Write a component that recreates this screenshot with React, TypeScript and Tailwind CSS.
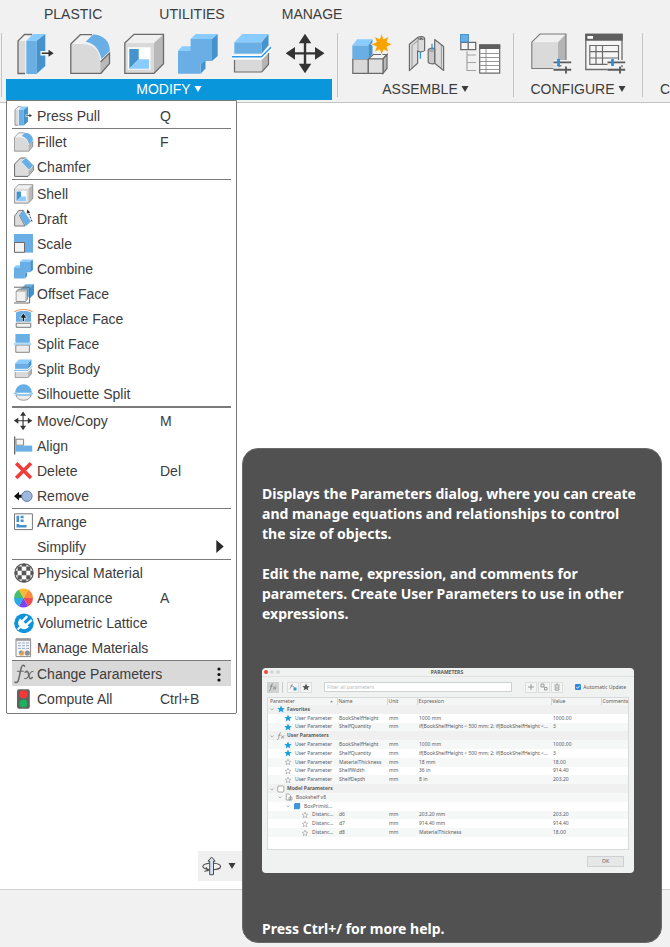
import type { ReactNode } from "react";

const EDGE = "#6b6b6b";
const BLUE = "#69afe5";
const BLUE_DARK = "#4493cf";
const BLUE_LIGHT = "#8accff";

function Art({ small, children }: { small?: boolean; children: ReactNode }) {
  return (
    <svg viewBox="0 0 42 42" className={small ? "size-5 shrink-0" : "size-[42px] shrink-0"} aria-hidden="true">
      {children}
    </svg>
  );
}

function Glyph({ children }: { children?: ReactNode }) {
  return (
    <svg viewBox="0 0 20 20" className="size-5 shrink-0" fill="none" aria-hidden="true">
      {children}
    </svg>
  );
}

/* Tool drawings on a 42 unit canvas, used in the ribbon and in the menu */

function PressPull({ small }: { small?: boolean }) {
  return (
    <Art small={small}>
      <path d="M2 8 8.5 1.5H16L10 8V40.5H2Z" fill="#d9d9d9" />
      <path d="M2 8 8.5 1.5H16L10 8Z" fill="#f3f3f3" />
      <path d="M16 1.5H8.5L2 8V40.5H9" fill="none" stroke={EDGE} strokeWidth="1.3" />
      <path d="M9.2 8H20.5V41H9.2Z" fill="#f5f5f5" />
      <path d="M10.3 8H20.5V41H10.3Z" fill={BLUE} />
      <path d="M10.3 8 17 1H29.3L20.5 8Z" fill={BLUE_LIGHT} />
      <path d="M29.3 1V33L20.5 41V8Z" fill={BLUE_DARK} />
      <path d="M24.5 18H31V15L38.5 20.2 31 25.5V22.5H24.5Z" fill="#f5f5f5" />
      <path d="M25.8 19.4H32.5V16.7L37.7 20.2 32.5 23.7V21H25.8Z" fill="#333" />
    </Art>
  );
}

function Fillet({ small }: { small?: boolean }) {
  return (
    <Art small={small}>
      <path d="M.8 11 10.3 1.7H23L15 10Z" fill="#f2f2f2" />
      <path d="M.8 11H13.3C24 11.5 30 18 30.3 30V40.3H.8Z" fill="#d9d9d9" />
      <path d="M30.3 29.5 39.5 20V30L31 40.3H30.3Z" fill="#b9b9b9" />
      <path d="M22 1.7H10.3L.8 11V40.3H31L39.5 30.5V20L30.5 29" fill="none" stroke={EDGE} strokeWidth="1.3" />
      <path d="M15.7 8.7 23 1.5C33 1.7 39.8 8 39.8 17.7L31.5 26.3C29.5 16.5 24 10 15.7 8.7Z" fill={BLUE} />
    </Art>
  );
}

function Shell({ small }: { small?: boolean }) {
  return (
    <Art small={small}>
      <path d="M.8 10 10 1.3H39.5L30 10Z" fill="#f0f0f0" />
      <path d="M30 10 39.5 1.3V30.7L30 40.3Z" fill="#b9b9b9" />
      <path d="M.8 10H30V40.3H.8Z" fill="#d9d9d9" />
      <path d="M.8 10 10 1.3H39.5V30.7L30 40.3H.8Z" fill="none" stroke={EDGE} strokeWidth="1.3" />
      <path d="M3.7 14.3H26.5V36.5H3.7Z" fill="#fff" />
      <path d="M5.3 16H14.7V26.3L5.3 35.7Z" fill={BLUE_DARK} />
      <path d="M14.7 26.3H25V35.7H5.3Z" fill={BLUE_LIGHT} />
    </Art>
  );
}

function Combine({ small }: { small?: boolean }) {
  return (
    <Art small={small}>
      <path d="M0 18 4 13.3H14V18Z" fill={BLUE_LIGHT} />
      <path d="M12.6 6 17.5 1H39.7L34 6Z" fill={BLUE_LIGHT} />
      <path d="M39.7 1V23L34 28V6Z" fill={BLUE_DARK} />
      <path d="M27.5 28V35.5L22.7 40.7V31L26 28Z" fill={BLUE_DARK} />
      <path d="M0 18H12.6V6H34V28H26L22.7 31V40.7H0Z" fill={BLUE} />
    </Art>
  );
}

function SplitBody({ small }: { small?: boolean }) {
  return (
    <Art small={small}>
      <path d="M2.3 9.3 10.3 1H36.5L29.7 9.3Z" fill={BLUE_LIGHT} />
      <path d="M2.3 9.3H29.7V20.7H2.3Z" fill={BLUE} />
      <path d="M36.5 1V12.3L29.7 20.7V9.3Z" fill={BLUE_DARK} />
      <path d="M2.5 27H29.7V39H2.5Z" fill="#d9d9d9" />
      <path d="M29.7 27 36.5 20V31.5L29.7 39Z" fill="#b5b5b5" />
      <path d="M2.5 27V39H29.7L36.5 31.5V20" fill="none" stroke={EDGE} strokeWidth="1.2" />
      <path d="M0 23.8H29.5L39 14.2" fill="none" stroke="#fff" strokeWidth="4" />
      <path d="M-.7 23.8H29.5L39 14.2" fill="none" stroke="#2f98ea" strokeWidth="1.5" />
    </Art>
  );
}

function Move({ small }: { small?: boolean }) {
  return (
    <Art small={small}>
      <path d="M19 .8 25.3 10.2H20.2V19.2H29V14L38.5 20.3 29 26.7V21.5H20.2V30.8H25.3L19 40.2 12.8 30.8H17.8V21.5H9V26.7L-.3 20.3 9 14V19.2H17.8V10.2H12.8Z" fill="#333" />
    </Art>
  );
}

function NewComponent() {
  return (
    <Art>
      <path d="M.8 26H16.3V40.3H.8Z" fill="#d9d9d9" stroke={EDGE} strokeWidth="1.2" />
      <path d="M16.3 26 21.3 21.5H35L31 26Z" fill="#f3f3f3" stroke={EDGE} strokeWidth="1.2" />
      <path d="M31 26 35 21.5V35.5L31 40.3Z" fill="#b9b9b9" stroke={EDGE} strokeWidth="1.2" />
      <path d="M16.3 26H31V40.3H16.3Z" fill="#e0e0e0" stroke={EDGE} strokeWidth="1.2" />
      <path d="M.3 12.5 5 6.3H20.5L16.3 12.5Z" fill={BLUE_LIGHT} />
      <path d="M.3 12.5H16.3V26H.3Z" fill={BLUE} />
      <path d="M20.5 6.3V21L16.3 26V12.5Z" fill={BLUE_DARK} />
      <path d="M29.7 .2 31.7 6 36.8 3.2 35 9 40.5 11.3 35 13.7 36.8 19.2 31.7 16.8 29.7 22.3 27.6 16.8 22.3 19.2 24.4 13.7 18.8 11.3 24.4 9 22.3 3.2 27.6 6Z" fill="#f9a300" stroke="#f1f1f1" strokeWidth=".8" />
    </Art>
  );
}

function Joint() {
  return (
    <Art>
      <g stroke={EDGE} strokeWidth="1.2" strokeLinejoin="round">
        <path d="M3.4 11.3 12 4.2C14 3 18.3 3.5 18.6 5.3V17.5C17.5 19 12.5 19.5 11.6 17.8V30.3L3.4 37.6Z" fill="#dcdcdc" />
        <path d="M12 5.2V17.5M6 36V12.5L12 7.5" fill="none" strokeWidth=".6" />
        <path d="M12 5.5C13.5 7 17.5 7 18.6 5.4" fill="none" strokeWidth=".9" />
        <path d="M28.7 6.5 37.6 13.5V37.5L28.7 30.3Z" fill="#dcdcdc" />
        <path d="M28.7 16C27 14.6 22.6 15.2 22.2 17V29C23 31 27.5 31.3 28.7 30.3Z" fill="#cbcbcb" />
        <path d="M22.2 17C23.5 18.5 27.5 18.7 28.7 17.5M35.4 12V35.7" fill="none" strokeWidth=".6" />
      </g>
      <path d="M14.4 18.7V25.8M26 10.7V17.5" stroke="#2f98ea" strokeWidth="1.3" />
      <path d="M13.5 5.3H16.5" stroke="#444" strokeWidth="1" />
    </Art>
  );
}

function ComponentTable() {
  return (
    <Art>
      <path d="M.8 9.3H8.2V16.7H.8ZM8.2 9.3H15.7V16.7H8.2Z" fill="#f5f5f5" stroke={EDGE} strokeWidth="1.3" />
      <path d="M0 1H9V9.3H0Z" fill={BLUE_DARK} />
      <path d="M1 2H8V8.5H1Z" fill={BLUE} />
      <path d="M7 18.3V37.5H16M7 22H16M7 29.5H16" fill="none" stroke="#a3a3a3" strokeWidth="1.2" />
      <path d="M19.7 12H39.7V40.2H19.7Z" fill="#fff" stroke={EDGE} strokeWidth="1.2" />
      <path d="M19.2 11.3H40.2V16H19.2Z" fill="#5f5f5f" />
      <path d="M19.7 20.5H39.7M19.7 24.5H39.7M19.7 28.5H39.7M19.7 32.5H39.7M19.7 36.5H39.7M26 16V40" stroke="#8a8a8a" strokeWidth=".9" />
    </Art>
  );
}

function Sliders() {
  return (
    <g>
      <path d="M22.5 29.4H40.2M22.5 36.8H40.2" stroke="#f1f1f1" strokeWidth="5" />
      <path d="M22.5 29.4H40.2M22.5 36.8H40.2" stroke="#5c5c5c" strokeWidth="1.9" />
      <path d="M35 33.4V40.4" stroke="#5c5c5c" strokeWidth="1.9" />
      <path d="M27.5 26V33" stroke="#2391e6" strokeWidth="2.8" />
    </g>
  );
}

function ConfigureBody() {
  return (
    <Art>
      <path d="M.8 9.2 9 1H35L27 9.2Z" fill="#f0f0f0" />
      <path d="M27 9.2 35 1V27L27 35.5Z" fill="#b4b4b4" />
      <path d="M.8 9.2H27V35.5H.8Z" fill="#dadada" />
      <path d="M.8 9.2 9 1H35V27L27 35.5H.8Z" fill="none" stroke="#7a7a7a" strokeWidth="1.1" />
      <Sliders />
    </Art>
  );
}

function ConfigureTable() {
  return (
    <Art>
      <path d="M.8 1.3H37V36.5H.8Z" fill="#f5f5f5" stroke={EDGE} strokeWidth="1.3" />
      <path d="M.2 .7H37.7V7.8H.2Z" fill="#5f5f5f" />
      <path d="M2.4 3H8V5.8H2.4Z" fill="#fff" />
      <path d="M4.8 12.5H33.5V31.3H4.8ZM4.8 18.7H33.5M4.8 25H33.5M11 12.5V31.3M17.5 12.5V31.3" fill="none" stroke={EDGE} strokeWidth="1.2" />
      <Sliders />
    </Art>
  );
}

/* Menu-only drawings on a 20 unit canvas */

const chamfer = (
  <Glyph>
    <path d="M.6 7 6.5 1H12L19.3 8.5V13.5L14 19.4H.6Z" fill="#dcdcdc" stroke={EDGE} />
    <path d="M14.5 14 19 9V13.8L14.5 19Z" fill="#b5b5b5" />
    <path d="M7 4.6 11.8 .8 19.5 8.2 15 13.2Z" fill={BLUE} stroke="#eef6fc" strokeWidth=".6" />
  </Glyph>
);
const draft = (
  <Glyph>
    <path d="M.6 7 4.8 1.4H9.5L5.5 6.5 11 17H.6Z" fill="#dcdcdc" stroke={EDGE} strokeWidth=".9" />
    <path d="M5.5 6 9.5 1.2 17 12.5 11.8 17.3Z" fill={BLUE} />
    <path d="M18 12.5 14 2.5" stroke="#333" strokeDasharray="2 1.3" />
    <path d="M13.2 .6 16.3 3.6 12.7 4.6Z" fill="#333" />
  </Glyph>
);
const scale = (
  <Glyph>
    <path d="M0 0H19V18.6H0Z" fill={BLUE} />
    <path d="M.5 8.5H10.5V18.3H.5Z" fill="#f3f3f3" stroke={EDGE} />
  </Glyph>
);
const offsetFace = (
  <Glyph>
    <path d="M6.5 5 11.5 .3H20V10L15.5 14Z" fill={BLUE} />
    <path d="M16 4 20 .3V10L16 14Z" fill={BLUE_DARK} />
    <path d="M0 3.2H15.6V19H0" stroke={EDGE} />
    <path d="M2.2 7.2 5 5H13.5V15L11.5 17.5H2.2Z" fill="#b9b9b9" stroke="#7c7c7c" strokeWidth=".8" />
    <path d="M2.6 7.8H11.4V17H2.6Z" fill="#f0f0f0" />
  </Glyph>
);
const replaceFace = (
  <Glyph>
    <path d="M.3 2.7C5.5-.3 13.5-.3 18.5 2.7" stroke="#e8a06c" strokeWidth="1.1" />
    <path d="M2 3.4C6 1.6 12.6 1.6 17 3.4V12.8H2Z" fill={BLUE} />
    <path d="M2.2 14.2H16.8V18.3H2.2Z" fill="#f3f3f3" stroke={EDGE} strokeWidth=".9" />
    <path d="M9.4 4 13 9H10.5V12.5H8.3V9H5.8Z" fill="#222" stroke="#e6f3fc" strokeWidth=".7" />
  </Glyph>
);
const splitFace = (
  <Glyph>
    <path d="M1.4 0H15.8V8.8H1.4Z" fill={BLUE} />
    <path d="M1.8 11H15.4V18.3H1.8Z" fill="#ededed" stroke={EDGE} strokeWidth=".8" />
    <path d="M0 10H17.3" stroke="#9bcff5" strokeWidth="1.5" />
  </Glyph>
);
const silhouette = (
  <Glyph>
    <path d="M1 8.8A8.5 8.5 0 0 1 18 8.8Z" fill={BLUE} />
    <path d="M1.8 11A8 7.2 0 0 0 17.2 11Z" fill="#ededed" stroke="#858585" strokeWidth=".8" />
    <path d="M0 9.2C5 11.8 14 11.8 19 9.2" stroke="#8ac8f4" strokeWidth="1.6" />
  </Glyph>
);
const align = (
  <Glyph>
    <path d="M.7 .5V18.5" stroke="#666" strokeWidth="1.3" />
    <path d="M2 3.2H9.6V9.2H2Z" fill="#f3f3f3" stroke="#777" strokeWidth=".9" />
    <path d="M1.4 9.6H18.2V15.6H1.4Z" fill={BLUE} />
  </Glyph>
);
const remove = (
  <Glyph>
    <path d="M0 10.2 5 5.8V8.7H9V11.7H5V14.6Z" fill="#111" />
    <circle cx="12.9" cy="10.2" r="5.2" fill="#9db7dd" stroke="#5f7ba6" />
  </Glyph>
);
const del = (
  <Glyph>
    <path d="M2.2 2.2 17 17M17 2.2 2.2 17" stroke="#f23c3c" strokeWidth="3.6" />
  </Glyph>
);
const arrange = (
  <Glyph>
    <path d="M.5 1.8H18.4V17.6H.5Z" fill="#fff" stroke="#777" />
    <path d="M2.5 3.8H5.2V10H2.5ZM6.6 3.8H9.6V6.3H6.6ZM6.6 7.5H9.6V10H6.6ZM2.5 12H5.2V13H12.5V15.6H2.5Z" fill={BLUE_DARK} />
  </Glyph>
);
const physical = (
  <Glyph>
    <clipPath id="ball">
      <circle cx="10" cy="10" r="9.2" />
    </clipPath>
    <circle cx="10" cy="10" r="9.2" fill="#fafafa" />
    <g clipPath="url(#ball)" fill="#565656">
      <path d="M7.7 0H12.3V3.6H7.7ZM3.6 3.6H7.7V7.8H3.6ZM12.3 3.6H16.4V7.8H12.3ZM7.7 7.8H12.3V12.2H7.7ZM0 7.8H3.6V12.2H0ZM16.4 7.8H20V12.2H16.4ZM3.6 12.2H7.7V16.4H3.6ZM12.3 12.2H16.4V16.4H12.3ZM7.7 16.4H12.3V20H7.7Z" />
    </g>
    <circle cx="10" cy="10" r="9.2" stroke="#555" strokeWidth="1.1" />
  </Glyph>
);
const appearance = (
  <Glyph>
    <path d="M9.5 10 4.8 1.8A9.4 9.4 0 0 1 14.2 1.8Z" fill="#fdb92e" />
    <path d="M9.5 10 14.2 1.8A9.4 9.4 0 0 1 18.9 10Z" fill="#ff8b3d" />
    <path d="M9.5 10H18.9A9.4 9.4 0 0 1 14.2 18.2Z" fill="#ef4b52" />
    <path d="M9.5 10 14.2 18.2A9.4 9.4 0 0 1 4.8 18.2Z" fill="#7b45ee" />
    <path d="M9.5 10 4.8 18.2A9.4 9.4 0 0 1 .1 10Z" fill="#29a9e6" />
    <path d="M9.5 10H.1A9.4 9.4 0 0 1 4.8 1.8Z" fill="#46bd6a" />
  </Glyph>
);
const volumetric = (
  <Glyph>
    <circle cx="10" cy="10.3" r="9.8" fill="#0d94db" />
    <path d="M6 5.5 15 13.8C12.6 16.6 9 17 6.8 15L4.2 17.2 3 15.7 5.4 13.4C3.4 11.2 3.8 8 6 5.5Z" fill="#fff" />
    <path d="M8.6 8 12.6 3.8M12.6 11.6 17 7.6" stroke="#fff" strokeWidth="2.4" strokeLinecap="round" />
  </Glyph>
);
const manage = (
  <Glyph>
    <path d="M2 .8H16.6V18.6H2Z" fill="#f4f5fa" stroke="#8b8b8b" />
    <path d="M2 .8H16.6V2.8H2Z" fill="#9a9a9a" />
    <path d="M4 5H15M4 7.7H15M4 10.4H15" stroke="#9aa9c8" strokeWidth="1" strokeDasharray="3 1" />
    <circle cx="7.5" cy="15" r="2.6" fill="#e8a33d" />
    <path d="M7.5 15V12.4A2.6 2.6 0 0 0 5 15Z" fill="#4c9be0" />
    <circle cx="13.3" cy="15" r="2.6" fill="#8f8f8f" />
  </Glyph>
);
const compute = (
  <Glyph>
    <rect x="3" y=".2" width="12.8" height="19.6" rx="2" fill="#616161" />
    <circle cx="9.4" cy="5.3" r="4" fill="#fb3636" />
    <circle cx="9.4" cy="14.4" r="4" fill="#19b35c" />
  </Glyph>
);
const fx = (
  <Glyph>
    <g stroke="#6a6a6a" strokeLinecap="round">
      <path d="M10.6 2.2C9.3 .6 8 1 7.3 3.6L4.6 15.5C4 18 2.5 19.3 .9 18.2" strokeWidth="1.5" />
      <path d="M3.4 7.2H9.3" strokeWidth="1.1" />
      <path d="M11.3 8.2C13 6.8 13.9 7.3 14.3 9L15.4 13.6C15.8 15 17 15.2 18.3 13.6" strokeWidth="1.6" />
      <path d="M19 7.6C17.4 6.8 16.6 8 15 11 13.6 13.8 12.4 15.6 10.6 14.4" strokeWidth="1.1" />
    </g>
  </Glyph>
);

type Item = { icon: ReactNode; label: string; keys?: string; submenu?: boolean; active?: boolean };
type Group = { className: string; items: Item[] };

const menu: Group[] = [
  { className: "", items: [{ icon: <PressPull small />, label: "Press Pull", keys: "Q" }] },
  {
    className: "border-t",
    items: [
      { icon: <Fillet small />, label: "Fillet", keys: "F" },
      { icon: chamfer, label: "Chamfer" },
    ],
  },
  {
    className: "border-t pt-px",
    items: [
      { icon: <Shell small />, label: "Shell" },
      { icon: draft, label: "Draft" },
      { icon: scale, label: "Scale" },
      { icon: <Combine small />, label: "Combine" },
      { icon: offsetFace, label: "Offset Face" },
      { icon: replaceFace, label: "Replace Face" },
      { icon: splitFace, label: "Split Face" },
      { icon: <SplitBody small />, label: "Split Body" },
      { icon: silhouette, label: "Silhouette Split" },
    ],
  },
  {
    className: "border-t-2",
    items: [
      { icon: <Move small />, label: "Move/Copy", keys: "M" },
      { icon: align, label: "Align" },
      { icon: del, label: "Delete", keys: "Del" },
      { icon: remove, label: "Remove" },
    ],
  },
  {
    className: "border-t",
    items: [
      { icon: arrange, label: "Arrange" },
      { icon: <Glyph />, label: "Simplify", submenu: true },
    ],
  },
  {
    className: "border-t",
    items: [
      { icon: physical, label: "Physical Material" },
      { icon: appearance, label: "Appearance", keys: "A" },
      { icon: volumetric, label: "Volumetric Lattice" },
      { icon: manage, label: "Manage Materials" },
    ],
  },
  {
    className: "border-t",
    items: [
      { icon: fx, label: "Change Parameters", active: true },
      { icon: compute, label: "Compute All", keys: "Ctrl+B" },
    ],
  },
];

function Caret() {
  return (
    <svg viewBox="0 0 8 6" className="h-1.5 w-2 shrink-0" aria-hidden="true">
      <path d="M.5 0H7.5L4 6Z" fill="currentColor" />
    </svg>
  );
}

function ModifyMenu() {
  return (
    <div className="absolute top-[100px] left-1.5 w-[231px] rounded-b-xs border border-[#7a7a7a] bg-white px-[5px] pt-0.5 pb-0.5" role="menu">
      {menu.map((group, g) => (
        <ul key={g} className={`border-[#7a7a7a] ${group.className}`}>
          {group.items.map((item) => (
            <li key={item.label}>
              <button
                type="button"
                role="menuitem"
                className={`flex h-[25px] w-full items-center pl-0.5 text-left ${item.active ? "bg-[#d9d9d9]" : ""}`}
              >
                {item.icon}
                <span className="ml-[3px] w-[123px] whitespace-nowrap">{item.label}</span>
                <span className="flex-1">{item.keys}</span>
                {item.submenu && (
                  <svg viewBox="0 0 8 14" className="mr-[7px] h-[13px] w-2" aria-hidden="true">
                    <path d="M0 0 8 7 0 14Z" fill="#2b2b2b" />
                  </svg>
                )}
                {item.active && (
                  <svg viewBox="0 0 4 16" className="mr-2.5 h-4 w-1" aria-hidden="true">
                    <g fill="#111">
                      <circle cx="2" cy="3" r="1.6" />
                      <circle cx="2" cy="8.5" r="1.6" />
                      <circle cx="2" cy="14" r="1.6" />
                    </g>
                  </svg>
                )}
              </button>
            </li>
          ))}
        </ul>
      ))}
    </div>
  );
}

/* Parameters dialog preview */

type Row = {
  kind: "group" | "user" | "doc" | "body" | "dim";
  icon?: "star" | "open" | "fx" | "model";
  label: string;
  name?: string;
  expr?: string;
  value?: string;
};

const user = "User Parameter";
const longExpr = "if(BookShelfHeight < 500 mm; 2; if(BookShelfHeight <...";
const rows: Row[] = [
  { kind: "group", icon: "star", label: "Favorites" },
  { kind: "user", icon: "star", label: user, name: "BookShelfHeight", expr: "1000 mm", value: "1000.00" },
  { kind: "user", icon: "star", label: user, name: "ShelfQuantity", expr: longExpr, value: "3" },
  { kind: "group", icon: "fx", label: "User Parameters" },
  { kind: "user", icon: "star", label: user, name: "BookShelfHeight", expr: "1000 mm", value: "1000.00" },
  { kind: "user", icon: "star", label: user, name: "ShelfQuantity", expr: longExpr, value: "3" },
  { kind: "user", icon: "open", label: user, name: "MaterialThickness", expr: "18 mm", value: "18.00" },
  { kind: "user", icon: "open", label: user, name: "ShelfWidth", expr: "36 in", value: "914.40" },
  { kind: "user", icon: "open", label: user, name: "ShelfDepth", expr: "8 in", value: "203.20" },
  { kind: "group", icon: "model", label: "Model Parameters" },
  { kind: "doc", label: "Bookshelf v8" },
  { kind: "body", label: "BoxPrimiti..." },
  { kind: "dim", icon: "open", label: "Distanc...", name: "d6", expr: "203.20 mm", value: "203.20" },
  { kind: "dim", icon: "open", label: "Distanc...", name: "d7", expr: "914.40 mm", value: "914.40" },
  { kind: "dim", icon: "open", label: "Distanc...", name: "d8", expr: "MaterialThickness", value: "18.00" },
];

const indent = { group: "pl-0.5", user: "pl-4", doc: "pl-2.5", body: "pl-[18px]", dim: "pl-[33px]" };

const STAR = "M4 .5 5.1 3 7.7 3.2 5.7 4.9 6.4 7.5 4 6 1.6 7.5 2.3 4.9 .3 3.2 2.9 3Z";
const SMALL_STAR = "M4 1.2 4.8 3.1 6.8 3.3 5.3 4.7 5.8 6.7 4 5.6 2.2 6.7 2.7 4.7 1.2 3.3 3.2 3.1Z";

function RowIcon({ row }: { row: Row }) {
  return (
    <svg viewBox="0 0 8 8" className="size-2 shrink-0" fill="none" aria-hidden="true">
      {row.icon === "star" && <path d={STAR} fill="#19a0e0" />}
      {row.icon === "open" && <path d={SMALL_STAR} stroke="#888" strokeWidth=".5" />}
      {row.icon === "fx" && <path d="M4 1C3 .5 2.6 1.5 2.3 3L1.5 6.5C1.2 7.5.8 7.8 0 7.5M1.2 3.2H3.6M4.4 3.6C5.5 3.2 5.3 6.5 7 6M7.3 3.5C6 3.6 5.5 6.2 4 6.2" stroke="#777" strokeWidth=".6" />}
      {row.icon === "model" && <rect x=".8" y="1" width="6" height="6" rx="1" fill="#fff" stroke="#777" strokeWidth=".6" />}
      {row.kind === "doc" && <path d="M1.2 1H4L5.5 2.7V7H1.2ZM4 4.2H7V7H4Z" fill="#fff" stroke="#777" strokeWidth=".6" />}
      {row.kind === "body" && <path d="M1 2 2.2 1H7.2V6L6 7.2H1Z" fill="#3f97d8" />}
    </svg>
  );
}

function ToolIcon({ d, fill }: { d: string; fill?: boolean }) {
  return (
    <svg viewBox="0 0 8 8" className="size-2" fill={fill ? "#555" : "none"} stroke={fill ? "none" : "#777"} strokeWidth=".7" aria-hidden="true">
      <path d={d} />
    </svg>
  );
}

function ParametersPreview() {
  const tool = "flex h-[11px] w-3 items-center justify-center border border-[#dcdddd] bg-[#f4f5f5]";
  return (
    <section aria-label="Parameters" className="flex h-[205px] flex-col rounded-[4px] bg-[#f0f1f1] text-[5px] leading-[7px] text-[#5c5c5c]">
      <div className="flex h-[9px] shrink-0 items-center border-b border-[#e0e1e1] pl-0.5">
        <span className="flex gap-0.5">
          <i className="size-1 rounded-full bg-[#f0443c]" />
          <i className="size-1 rounded-full bg-[#d5d6d6]" />
          <i className="size-1 rounded-full bg-[#d5d6d6]" />
        </span>
        <h2 className="flex-1 pr-5 text-center font-bold">PARAMETERS</h2>
      </div>
      <div className="flex h-5 shrink-0 items-center pl-[5px] pr-2">
        <button type="button" aria-label="Show user parameters" className="flex h-[11px] w-3 items-center justify-center bg-[#d0d1d1]">
          <ToolIcon d="M4 1C3 .5 2.6 1.5 2.3 3L1.5 6.5C1.2 7.5.8 7.8 0 7.5M1.2 3.2H3.6M4.4 3.6C5.5 3.2 5.3 6.5 7 6M7.3 3.5C6 3.6 5.5 6.2 4 6.2" />
        </button>
        <i className="mr-1 ml-[3px] h-[11px] w-px bg-[#c9caca]" />
        <button type="button" aria-label="Show linked parameters" className={tool}>
          <svg viewBox="0 0 8 8" className="size-2" fill="none" aria-hidden="true">
            <path d="M3.5 1C2.5 1 2.3 5.5 .6 5.6M1.4 3H4M4 3.2 6 5" stroke="#777" strokeWidth=".7" />
            <path d="M4.5 4.5H7.5V7.5H4.5Z" fill="#3f97d8" />
          </svg>
        </button>
        <button type="button" aria-label="Show favorites" className={`${tool} ml-px`}>
          <ToolIcon d={STAR} fill />
        </button>
        <input aria-label="Filter all parameters" placeholder="Filter all parameters" className="ml-3 h-[10px] min-w-0 flex-1 border border-[#cfd0d0] bg-white px-0.5 placeholder:text-[#bbb]" />
        <button type="button" aria-label="Add" className={`${tool} ml-[13px]`}>
          <ToolIcon d="M4 1V7M1 4H7" />
        </button>
        <button type="button" aria-label="Copy" className={`${tool} ml-px`}>
          <ToolIcon d="M1 1H4V4H1ZM4.5 4.5H7V7H4.5Z" />
        </button>
        <button type="button" aria-label="Delete" className={`${tool} ml-px`}>
          <ToolIcon d="M1.5 2H6.5M2.2 2.5V7.2H5.8V2.5M3.3 1H4.7M4 3.5V6" />
        </button>
        <label className="ml-3 flex items-center gap-0.5 whitespace-nowrap">
          <span className="relative flex size-1.5">
            <input type="checkbox" defaultChecked className="size-1.5 appearance-none rounded-[1px] bg-[#2e86dc]" />
            <svg viewBox="0 0 6 6" className="pointer-events-none absolute inset-0" aria-hidden="true">
              <path d="M1.3 3 2.6 4.4 4.8 1.6" fill="none" stroke="#fff" strokeWidth=".8" />
            </svg>
          </span>
          Automatic Update
        </label>
      </div>
      <div className="mr-[5px] ml-[5px] flex-1 border border-[#d8d9d9] bg-white">
        <table className="h-[139px] w-full table-fixed border-collapse whitespace-nowrap">
          <colgroup>
            <col className="w-[69px]" />
            <col className="w-[50px]" />
            <col className="w-[30px]" />
            <col />
            <col className="w-[50px]" />
            <col className="w-[27px]" />
          </colgroup>
          <thead>
            <tr className="bg-[#f4f5f5] text-left">
              {["Parameter", "Name", "Unit", "Expression", "Value", "Comments"].map((h, i) => (
                <th key={h} scope="col" className={`p-0 font-normal ${i ? "border-l border-[#d5d6d6] pl-px" : "pl-0.5"}`}>
                  {i === 0 ? (
                    <span className="flex items-center justify-between pr-1">
                      {h}
                      <svg viewBox="0 0 4 4" className="size-[3px]" aria-hidden="true">
                        <path d="M0 3 2 1 4 3Z" fill="#777" />
                      </svg>
                    </span>
                  ) : (
                    h
                  )}
                </th>
              ))}
            </tr>
          </thead>
          <tbody>
            {rows.map((r, i) => (
              <tr key={i} className={r.kind === "group" ? "bg-[#f0f0f0]" : i % 2 ? "bg-white" : "bg-[#f6f7f7]"}>
                <td className={`p-0 ${indent[r.kind]}`}>
                  <span className="flex items-center">
                    {(r.kind === "group" || r.kind === "doc" || r.kind === "body") && (
                      <svg viewBox="0 0 4 4" className="mr-[3px] size-1 shrink-0" aria-hidden="true">
                        <path d="M.5 1.5 2 3 3.5 1.5" fill="none" stroke="#888" strokeWidth=".6" />
                      </svg>
                    )}
                    <RowIcon row={r} />
                    <span className={r.kind === "group" ? "ml-0.5 font-bold" : "ml-[3px]"}>{r.label}</span>
                  </span>
                </td>
                <td className="p-0 pl-0.5">{r.name}</td>
                <td className="p-0 pl-0.5">{r.name && "mm"}</td>
                <td className="p-0 pl-0.5">{r.expr}</td>
                <td className="p-0 pl-0.5">{r.value}</td>
                <td className="p-0" />
              </tr>
            ))}
          </tbody>
        </table>
      </div>
      <div className="flex h-[23px] shrink-0 items-center justify-end pr-2.5">
        <button type="button" className="h-[11px] w-[37px] border border-[#cfd0d0] bg-[#e6e7e7]">
          OK
        </button>
      </div>
    </section>
  );
}

function Tooltip() {
  return (
    <aside
      role="tooltip"
      className="absolute top-[448px] right-2 left-[242px] flex h-[495px] flex-col rounded-2xl border border-[#6a6a6a] bg-[#515151] px-[19px] pt-[35px] font-['Noto_Sans',sans-serif]"
    >
      <p className="text-sm leading-5 font-bold text-white">
        Displays the Parameters dialog, where you can create and manage equations and relationships to control the size of objects.
      </p>
      <p className="mt-5 mb-11 text-sm leading-5 font-bold text-white">
        Edit the name, expression, and comments for parameters. Create User Parameters to use in other expressions.
      </p>
      <div className="mr-2">
        <ParametersPreview />
      </div>
      <p className="mt-[46px] text-sm leading-5 font-bold text-white">Press Ctrl+/ for more help.</p>
    </aside>
  );
}

function ToolGroup({ label, tools, className, active }: { label: string; tools: { name: string; icon: ReactNode }[]; className: string; active?: boolean }) {
  return (
    <div className="flex shrink-0 flex-col">
      <div className={`flex h-[46px] gap-3 ${className}`}>
        {tools.map((t) => (
          <button key={t.name} type="button" aria-label={t.name} className="h-[42px]">
            {t.icon}
          </button>
        ))}
      </div>
      <button
        type="button"
        className={`flex h-[21px] items-center justify-center gap-[3px] pb-0.5 ${active ? "bg-[#0a96db] text-white" : ""}`}
      >
        {label}
        <Caret />
      </button>
    </div>
  );
}

function Divider() {
  return <i className="h-16 w-px shrink-0 bg-[#c4c4c4]" />;
}

export default function App() {
  return (
    <div className="relative flex h-screen flex-col overflow-hidden bg-white font-['Liberation_Sans',Arial,sans-serif] text-sm text-[#3c3c3c]">
      <header className="flex h-[103px] shrink-0 flex-col border-b border-[#c4c4c4] bg-[#f1f1f1]">
        <nav className="flex h-[33px] shrink-0 items-start gap-[57px] pt-1 pl-11">
          <button type="button">PLASTIC</button>
          <button type="button">UTILITIES</button>
          <button type="button">MANAGE</button>
        </nav>
        <div className="flex overflow-hidden pl-px">
          <Divider />
          <div className="mr-[5px] ml-1">
            <ToolGroup
              active
              label="MODIFY"
              className="pr-1 pl-2.5"
              tools={[
                { name: "Press Pull", icon: <PressPull /> },
                { name: "Fillet", icon: <Fillet /> },
                { name: "Shell", icon: <Shell /> },
                { name: "Combine", icon: <Combine /> },
                { name: "Split Body", icon: <SplitBody /> },
                { name: "Move/Copy", icon: <Move /> },
              ]}
            />
          </div>
          <Divider />
          <ToolGroup
            label="ASSEMBLE"
            className="pr-[11px] pl-3.5"
            tools={[
              { name: "New Component", icon: <NewComponent /> },
              { name: "Joint", icon: <Joint /> },
              { name: "Component Table", icon: <ComponentTable /> },
            ]}
          />
          <Divider />
          <ToolGroup
            label="CONFIGURE"
            className="pr-[15px] pl-[17px]"
            tools={[
              { name: "Configure Model", icon: <ConfigureBody /> },
              { name: "Configuration Table", icon: <ConfigureTable /> },
            ]}
          />
          <Divider />
          <button type="button" className="mt-[46px] flex h-[21px] items-center pb-0.5 pl-[17px]">
            C
          </button>
        </div>
      </header>
      <main className="flex flex-1 items-end pb-2 pl-[198px]">
        <button type="button" aria-label="Orbit" className="flex h-[30px] w-16 items-center gap-1.5 bg-[#f0f0f0] pl-1">
          <svg viewBox="0 0 20 20" className="size-5" fill="none" stroke="#4a4a4a" aria-hidden="true">
            <path d="M7.5 7.2C3.5 7.6.8 8.8.8 10.5S4.5 13.8 9.5 13.8 18.6 12.4 18.6 10.5 15.5 7.5 11.7 7.2" strokeWidth="1.1" />
            <path d="M7.7 18.7V5.2H6L9.6 1 13.2 5.2H11.5V18.7Z" fill="#d6e0ee" />
            <path d="M4 11.3 6.2 14.6 2.4 15.2" strokeWidth="1.1" />
          </svg>
          <Caret />
        </button>
      </main>
      <footer className="h-[58px] shrink-0 border-t border-[#cfcfcf] bg-[#f1f1f1]" />
      <ModifyMenu />
      <Tooltip />
    </div>
  );
}
